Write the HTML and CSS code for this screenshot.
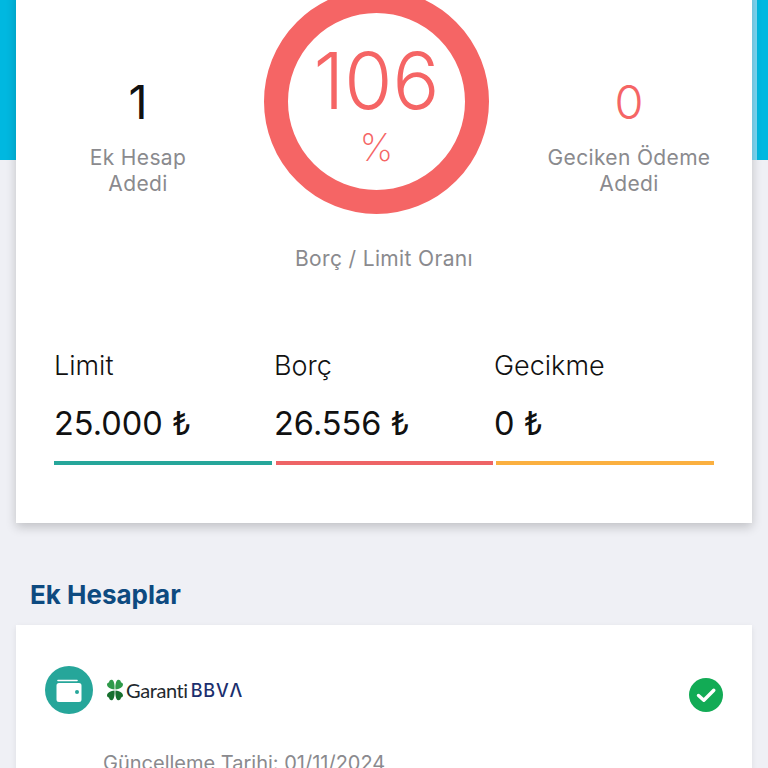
FILE: index.html
```html
<!DOCTYPE html>
<html lang="tr">
<head>
    <meta charset="UTF-8">
    <meta name="viewport" content="width=device-width, initial-scale=1.0">
    <title>Ek Hesaplar</title>
    <link rel="stylesheet" href="styles.css">
</head>
<body>
    <div class="page">
        <div class="top-band"></div>

        <section class="summary-card">
            <div class="stats">
                <div class="stat">
                    <div class="stat-number">1</div>
                    <div class="stat-label">Ek Hesap<br>Adedi</div>
                </div>
                <div class="ring">
                    <span class="ring-value">106</span>
                    <span class="ring-unit">%</span>
                </div>
                <div class="stat stat-right">
                    <div class="stat-number red">0</div>
                    <div class="stat-label">Geciken Ödeme<br>Adedi</div>
                </div>
            </div>
            <div class="ring-label">Borç / Limit Oranı</div>

            <div class="totals">
                <div class="total">
                    <div class="total-title">Limit</div>
                    <div class="total-value">25.000 ₺</div>
                    <div class="total-bar bar-teal"></div>
                </div>
                <div class="total">
                    <div class="total-title">Borç</div>
                    <div class="total-value">26.556 ₺</div>
                    <div class="total-bar bar-red"></div>
                </div>
                <div class="total">
                    <div class="total-title">Gecikme</div>
                    <div class="total-value">0 ₺</div>
                    <div class="total-bar bar-orange"></div>
                </div>
            </div>
        </section>

        <h2 class="section-title">Ek Hesaplar</h2>

        <section class="account-card">
            <div class="account-head">
                <div class="wallet">
                    <svg width="26" height="23" viewBox="0 0 26 23">
                        <path d="M2 1.500h19" stroke="#fff" stroke-width="1.600" stroke-linecap="round"/>
                        <path d="M3 4h20a2.500 2.500 0 0 1 2.500 2.500v14a2.500 2.500 0 0 1-2.500 2.500H3a2.500 2.500 0 0 1-2.500-2.500v-14A2.500 2.500 0 0 1 3 4z" fill="#fff"/>
                        <circle cx="21" cy="13" r="2" fill="#26a69a"/>
                    </svg>
                </div>
                <div class="bank-logo">
                    <svg width="18" height="24" viewBox="0 0 18 24">
                        <g fill="#2f9a4a">
                            <path d="M8.500 11.500C5 11 1 9.500 1 6.500 1 5 2.500 4.500 3 4.500 3 2.500 5 1 6.500 2 8 3 9 7 8.500 11.500z"/>
                            <path d="M9.500 11.500C13 11 17 9.500 17 6.500 17 5 15.500 4.500 15 4.500 15 2.500 13 1 11.500 2 10 3 9 7 9.500 11.500z"/>
                        </g>
                        <g fill="#17702f">
                            <path d="M8.500 12.500C5 13 1 14.500 1 17.500 1 19 2.500 19.500 3 19.500 3 21.500 5 23 6.500 22 8 21 9 17 8.500 12.500z"/>
                            <path d="M9.500 12.500C13 13 17 14.500 17 17.500 17 19 15.500 19.500 15 19.500 15 21.500 13 23 11.500 22 10 21 9 17 9.500 12.500z"/>
                        </g>
                    </svg>
                    <span class="bank-name">Garanti</span>
                    <span class="bank-bbva">BBVΛ</span>
                </div>
                <div class="check">
                    <svg width="34" height="34" viewBox="0 0 34 34">
                        <circle cx="17" cy="17" r="17" fill="#12ab55"/>
                        <path d="M9.500 17.500l5.300 4.700 10-10" fill="none" stroke="#fff" stroke-width="3.400" stroke-linecap="round" stroke-linejoin="round"/>
                    </svg>
                </div>
            </div>
            <div class="updated">Güncelleme Tarihi: 01/11/2024</div>
        </section>
    </div>
</body>
</html>
```

FILE: styles.css
```css
* {
    margin: 0;
    padding: 0;
    box-sizing: border-box;
}

body {
    font-family: 'Inter', 'Liberation Sans', sans-serif;
    background: #eff0f5;
    color: #111;
}

.page {
    height: 768px;
    overflow: hidden;
}

.top-band {
    height: 160px;
    background: linear-gradient(90deg, #00b8e0 752px, #7dd8f5 752px, #7dd8f5 757px, #00b8e0 757px);
}

.summary-card {
    position: relative;
    height: 534px;
    margin: -171px 16px 0;
    background: white;
    box-shadow: 0 4px 10px rgba(0,0,0,0.2);
}

.stats {
    display: grid;
    grid-template-columns: 244px 225px 1fr;
    column-gap: 4px;
}

.stat {
    padding-top: 85px;
    text-align: center;
}

.stat-right {
    padding-left: 13px;
}

.stat-number {
    font-size: 47px;
    font-weight: 400;
    line-height: 56px;
    color: #111;
}

.stat-number.red {
    font-weight: 300;
    color: #f56565;
}

.stat-label {
    margin-top: 15px;
    font-size: 21px;
    letter-spacing: 0.35px;
    line-height: 26px;
    color: #8a8a8e;
}

.ring {
    width: 225px;
    height: 225px;
    border: 24px solid #f56565;
    border-radius: 50%;
    display: flex;
    flex-direction: column;
    align-items: center;
    color: #f56565;
}

.ring-value {
    margin-top: 26px;
    font-size: 78px;
    font-weight: 300;
    line-height: 84px;
}

.ring-unit {
    margin-top: 4px;
    font-size: 38px;
    font-weight: 200;
    line-height: 40px;
}

.ring-label {
    margin-top: 32px;
    font-size: 21px;
    letter-spacing: 0.35px;
    line-height: 26px;
    text-align: center;
    color: #8a8a8e;
}

.totals {
    display: grid;
    grid-template-columns: repeat(3, 220px);
    margin: 78px 0 0 38px;
}

.total-title {
    font-size: 27px;
    font-weight: 300;
    line-height: 32px;
}

.total-value {
    margin-top: 23px;
    font-size: 32.500px;
    font-weight: 380;
    line-height: 38px;
}

.total-bar {
    height: 4px;
    margin-top: 18px;
}

.bar-teal { width: 218px; background: #26a69a; }
.bar-red { width: 217px; margin-left: 2px; background: #ee6466; }
.bar-orange { width: 218px; margin-left: 2px; background: #fbb040; }

.section-title {
    margin: 57px 0 0 30px;
    font-size: 26px;
    font-weight: 700;
    line-height: 30px;
    color: #0d4a80;
}

.account-card {
    height: 200px;
    margin: 15px 16px 0;
    padding: 41px 29px 0;
    background: white;
    box-shadow: 0 2px 6px rgba(0,0,0,0.08);
}

.account-head {
    display: flex;
    align-items: flex-start;
}

.wallet {
    width: 48px;
    height: 48px;
    border-radius: 50%;
    background: #26a69a;
    display: flex;
    align-items: center;
    justify-content: center;
}

.bank-logo {
    display: flex;
    align-items: center;
    height: 28px;
    margin: 10px 0 0 13px;
}

.bank-name {
    margin-left: 2px;
    font-family: 'Lato', sans-serif;
    font-size: 20px;
    letter-spacing: -0.4px;
    color: #1f2a2e;
}

.bank-bbva {
    margin-left: 3px;
    font-size: 18px;
    font-weight: 500;
    letter-spacing: 0.8px;
    color: #1b2f6e;
}

.check {
    margin: 12px 0 0 auto;
    height: 34px;
}

.updated {
    margin: 37px 0 0 58px;
    font-size: 20px;
    line-height: 24px;
    color: #8a8a8e;
}
```
